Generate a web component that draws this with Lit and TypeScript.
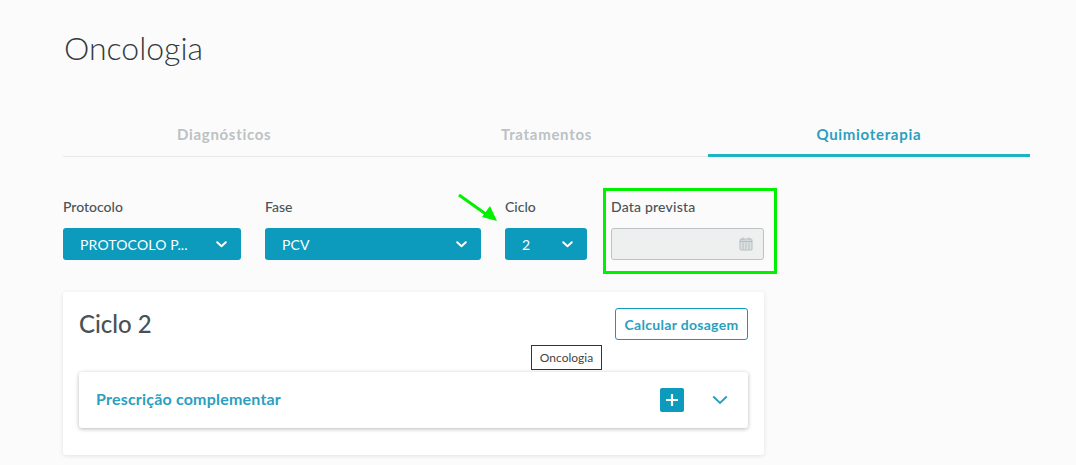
import { LitElement, css, html } from 'lit'
import { customElement } from 'lit/decorators.js'

const chevron = html`<svg class="chev" width="11" height="7" viewBox="0 0 11 7"><path d="M1.2 1.2 5.5 5.300l4.300-4.100" fill="none" stroke="currentColor" stroke-width="1.9" stroke-linecap="round" stroke-linejoin="round"/></svg>`

@customElement('app-root')
export class AppRoot extends LitElement {
  static styles = css`
    :host {
      display: block;
      height: 465px;
      overflow: hidden;
      position: relative;
      background: #fbfbfb;
      font-family: Lato, 'Open Sans', sans-serif;
      color: #4a5357;
    }
    .page {
      padding: 26px 46px 0 63px;
    }
    h1 {
      margin: 0 0 0 1px;
      font-size: 32px;
      line-height: 44px;
      font-weight: 300;
      color: #33393c;
    }
    .tabs {
      display: grid;
      grid-template-columns: repeat(3, 1fr);
      margin-top: 42px;
      border-bottom: 1px solid #e8e8e8;
    }
    .tab {
      height: 44px;
      display: flex;
      align-items: center;
      justify-content: center;
      font-size: 15px;
      font-weight: 700;
      color: #bcc1c3;
      letter-spacing: 0.7px;
      box-sizing: border-box;
      margin-bottom: -1px;
    }
    .tab.active {
      color: #2a9fc0;
      border-bottom: 3px solid #1fb3c6;
      height: 45px;
      padding-top: 2px;
    }
    .filters {
      display: flex;
      margin-top: 31px;
      align-items: flex-start;
    }
    .field {
      display: flex;
      flex-direction: column;
      margin-top: 10px;
      margin-right: 24px;
    }
    .field.last {
      margin-right: 16px;
    }
    .field label {
      font-size: 14px;
      line-height: 17px;
      font-weight: 500;
      margin-bottom: 13px;
    }
    .select {
      height: 32px;
      box-sizing: border-box;
      border-radius: 3px;
      background: #0c9abd;
      color: #fff;
      display: flex;
      align-items: center;
      justify-content: space-between;
      padding: 0 14px 0 17px;
      font-size: 14px;
      letter-spacing: 0.15px;
      white-space: nowrap;
    }
    .w-protocolo { width: 178px; }
    .w-fase { width: 216px; }
    .w-ciclo { width: 82px; }
    .highlight {
      border: 3px solid #00f000;
      box-sizing: border-box;
      width: 174px;
      height: 86px;
      padding: 7px 10px 0 5px;
      display: flex;
      flex-direction: column;
    }
    .highlight label {
      font-size: 14px;
      line-height: 17px;
      font-weight: 500;
      margin-bottom: 13px;
      letter-spacing: 0.2px;
    }
    .date {
      height: 32px;
      box-sizing: border-box;
      background: #eef0ef;
      border: 1px solid #bcc3c6;
      border-radius: 3px;
      display: flex;
      align-items: center;
      justify-content: flex-end;
      padding-right: 10px;
      color: #b4bcc0;
    }
    .card {
      margin-top: 18px;
      width: 701px;
      height: 163px;
      box-sizing: border-box;
      background: #fff;
      border-radius: 3px;
      box-shadow: 0 1px 4px rgba(0, 0, 0, 0.1);
      padding: 16px 16px 0;
    }
    .card-head {
      display: flex;
      justify-content: space-between;
      align-items: flex-start;
    }
    h2 {
      margin: 0;
      font-size: 24px;
      line-height: 32px;
      font-weight: 500;
      color: #485256;
    }
    .btn {
      width: 133px;
      height: 32px;
      box-sizing: border-box;
      border: 1px solid #0c9abd;
      border-radius: 3px;
      background: #fff;
      color: #2a9fc0;
      font: 700 14px Lato, 'Open Sans', sans-serif;
      letter-spacing: 0.3px;
      padding: 0;
    }
    .panel {
      margin-top: 32px;
      height: 56px;
      box-sizing: border-box;
      border-radius: 3px;
      background: #fff;
      box-shadow: 0 1px 4px rgba(0, 0, 0, 0.28);
      display: flex;
      align-items: center;
      padding: 0 20px 0 17px;
    }
    .panel span {
      flex: 1;
      font-size: 16px;
      font-weight: 700;
      color: #2a9fc0;
      letter-spacing: 0.2px;
      padding-bottom: 4px;
    }
    .plus {
      width: 24px;
      height: 24px;
      border-radius: 2px;
      background: #0c9abd;
      display: flex;
      align-items: center;
      justify-content: center;
      margin-right: 28px;
    }
    .toggle {
      color: #2a9fc0;
    }
    .tooltip {
      position: absolute;
      left: 531px;
      top: 345px;
      width: 71px;
      height: 25px;
      box-sizing: border-box;
      background: #fff;
      border: 1px solid #333;
      display: flex;
      align-items: center;
      justify-content: center;
      font-size: 12px;
      color: #444;
    }
    .arrow {
      position: absolute;
      left: 456px;
      top: 192px;
    }
  `

  render() {
    return html`
      <div class="page">
        <h1>Oncologia</h1>
        <div class="tabs">
          <div class="tab">Diagnósticos</div>
          <div class="tab">Tratamentos</div>
          <div class="tab active">Quimioterapia</div>
        </div>
        <div class="filters">
          <div class="field">
            <label>Protocolo</label>
            <div class="select w-protocolo">PROTOCOLO P...${chevron}</div>
          </div>
          <div class="field">
            <label>Fase</label>
            <div class="select w-fase">PCV${chevron}</div>
          </div>
          <div class="field last">
            <label>Ciclo</label>
            <div class="select w-ciclo">2${chevron}</div>
          </div>
          <div class="highlight">
            <label>Data prevista</label>
            <div class="date">
              <svg width="14" height="14" viewBox="0 0 14 14">
                <rect x="1" y="2" width="12" height="11" rx="1" fill="#dfe3e4" stroke="currentColor"/>
                <path d="M1 4.500h12" stroke="currentColor" stroke-width="1.500"/>
                <path d="M4 0.500v2.500M10 0.500v2.500" stroke="currentColor"/>
                <path d="M3 7h2M6 7h2M9 7h2M3 9h2M6 9h2M9 9h2M3 11h2M6 11h2M9 11h2" stroke="currentColor"/>
              </svg>
            </div>
          </div>
        </div>
        <div class="card">
          <div class="card-head">
            <h2>Ciclo 2</h2>
            <button class="btn">Calcular dosagem</button>
          </div>
          <div class="panel">
            <span>Prescrição complementar</span>
            <div class="plus">
              <svg width="14" height="14" viewBox="0 0 14 14"><path d="M7 1v12M1 7h12" stroke="#fff" stroke-width="2.2"/></svg>
            </div>
            <svg class="toggle" width="16" height="10" viewBox="0 0 16 10"><path d="M1.2 1.500 8 8l6.800-6.500" fill="none" stroke="currentColor" stroke-width="1.900"/></svg>
          </div>
        </div>
      </div>
      <div class="tooltip">Oncologia</div>
      <svg class="arrow" width="44" height="32" viewBox="0 0 44 32">
        <path d="M3 3 34 25" stroke="#00f000" stroke-width="3" fill="none"/>
        <path d="M41 29 26 25l8-11z" fill="#00f000"/>
      </svg>
    `
  }
}
